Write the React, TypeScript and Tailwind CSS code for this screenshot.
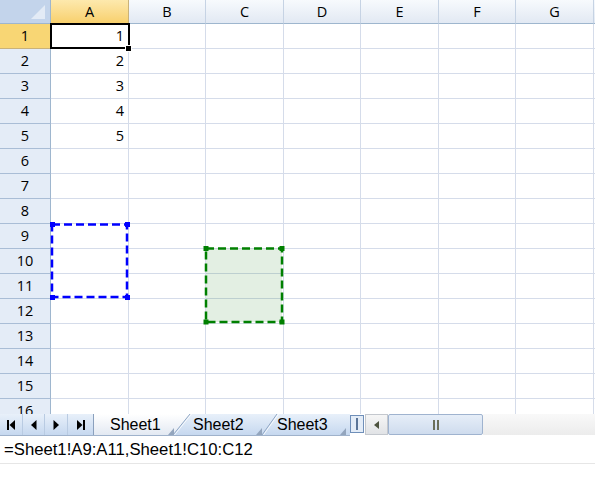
import React from 'react';

const COLS = ['A', 'B', 'C', 'D', 'E', 'F', 'G'];
const ROWS = Array.from({ length: 16 }, (_, i) => i + 1);

function Corner() {
  return (
    <div className="bg-[#c3d4eb] border-r border-b border-[#9eb6ce]">
      <svg width="50" height="23" className="block">
        <polygon points="45,5 45,19 31,19" fill="#e3ebf6" />
      </svg>
    </div>
  );
}

function NavGlyph({ kind }: { kind: 'first' | 'prev' | 'next' | 'last' }) {
  return (
    <svg width="10" height="10" viewBox="0 0 10 10" className="block">
      {kind === 'first' && (
        <>
          <rect x="1" y="0" width="2" height="10" fill="#000" />
          <polygon points="9,0 9,10 3.5,5" fill="#000" />
        </>
      )}
      {kind === 'prev' && <polygon points="7.5,0 7.5,10 2,5" fill="#000" />}
      {kind === 'next' && <polygon points="2.5,0 2.5,10 8,5" fill="#000" />}
      {kind === 'last' && (
        <>
          <polygon points="1,0 1,10 6.5,5" fill="#000" />
          <rect x="7" y="0" width="2" height="10" fill="#000" />
        </>
      )}
    </svg>
  );
}

export default function App() {
  return (
    <div className="w-[595px] h-[478px] bg-white overflow-hidden flex flex-col [font-family:'Open_Sans',sans-serif]">
      {/* Grid */}
      <div className="relative h-[414px] overflow-hidden shrink-0">
        <div className="grid grid-cols-[51px_78px_77px_78px_77px_78px_77px_78px_1fr] grid-rows-[24px_repeat(16,25px)] text-[14.5px] text-black">
          <Corner />
          {COLS.map((c, i) => (
            <div
              key={c}
              className={
                'flex items-center justify-center border-b border-r border-b-[#9eb6ce] ' +
                (i === 0
                  ? 'bg-gradient-to-b from-[#fde9ad] to-[#f8d06c] border-r-[#c9b27a]'
                  : 'bg-gradient-to-b from-[#f7fafd] to-[#e2e9f3] border-r-[#c6d3e4]')
              }
            >
              {c}
            </div>
          ))}
          <div className="bg-gradient-to-b from-[#f7fafd] to-[#e2e9f3] border-b border-[#9eb6ce]" />
          {ROWS.map((r) => (
            <React.Fragment key={r}>
              <div
                className={
                  'flex items-center justify-center border-r border-b border-r-[#9eb6ce] ' +
                  (r === 1 ? 'bg-[#f8d674] border-b-[#c9b27a]' : 'bg-[#e4ecf7] border-b-[#a9bdd6]')
                }
              >
                {r}
              </div>
              {COLS.map((c, i) => (
                <div
                  key={c}
                  className="flex items-center justify-end pr-[4px] border-r border-b border-[#d5dcea]"
                >
                  {i === 0 && r <= 5 ? r : ''}
                </div>
              ))}
              <div className="border-b border-[#d5dcea]" />
            </React.Fragment>
          ))}
        </div>

        {/* Overlays */}
        <div className="absolute left-[50px] top-[23px] w-[80px] h-[26px] border-2 border-black pointer-events-none" />
        <div className="absolute left-[125px] top-[45px] w-[7px] h-[7px] bg-black border border-white pointer-events-none" />

        <svg className="absolute left-0 top-0 pointer-events-none" width="595" height="414">
          <rect x="52" y="224.5" width="75" height="72.5" fill="none" stroke="#0000ff" strokeWidth="2.5" strokeDasharray="8 4" />
          <rect x="50" y="222" width="5" height="5" fill="#0000ff" />
          <rect x="125" y="222" width="5" height="5" fill="#0000ff" />
          <rect x="50" y="295" width="5" height="5" fill="#0000ff" />
          <rect x="125" y="295" width="5" height="5" fill="#0000ff" />

          <rect x="206" y="248.5" width="76" height="73.5" fill="rgba(0,110,0,0.11)" stroke="#008000" strokeWidth="2.5" strokeDasharray="8 4" />
          <rect x="203.5" y="246" width="5" height="5" fill="#008000" />
          <rect x="279.5" y="246" width="5" height="5" fill="#008000" />
          <rect x="203.5" y="319.5" width="5" height="5" fill="#008000" />
          <rect x="279.5" y="319.5" width="5" height="5" fill="#008000" />
        </svg>
      </div>

      {/* Tab strip + scrollbar */}
      <div className="flex h-[22px] shrink-0 [font-family:'Liberation_Sans',Arial,sans-serif] text-[16px] text-black">
        <div className="relative w-[350px] h-[22px] bg-gradient-to-b from-[#e8f0fa] to-[#c6d8ef] border-b border-[#9fb2cb]">
          <svg className="absolute left-0 top-0" width="350" height="21">
            <defs>
              <linearGradient id="act" x1="0" y1="0" x2="0" y2="1">
                <stop offset="0" stopColor="#ffffff" />
                <stop offset="1" stopColor="#e3e9f2" />
              </linearGradient>
            </defs>
            <polygon points="93,0 190,0 173,21 93,21" fill="url(#act)" />
            <line x1="93.5" y1="0" x2="93.5" y2="21" stroke="#8aa0bd" />
            <line x1="173" y1="21" x2="190" y2="0" stroke="#8fa6c4" />
            <line x1="174.5" y1="21" x2="191.5" y2="0" stroke="#ffffff" strokeOpacity="0.8" />
            <polygon points="168,21 174,14 174,21" fill="#93a5bd" />
            <line x1="262" y1="21" x2="277" y2="0" stroke="#8fa6c4" />
            <line x1="263.5" y1="21" x2="278.5" y2="0" stroke="#ffffff" strokeOpacity="0.8" />
            <polygon points="256,21 262,14 262,21" fill="#93a5bd" />
            <polygon points="340,21 346,14 346,21" fill="#93a5bd" />
          </svg>
          <div className="relative flex h-full items-stretch">
            <div className="flex w-[93px]">
              <div className="w-[23px] flex items-center justify-center border-r border-[#b9cbe2]"><NavGlyph kind="first" /></div>
              <div className="w-[22px] flex items-center justify-center border-r border-[#b9cbe2]"><NavGlyph kind="prev" /></div>
              <div className="w-[23px] flex items-center justify-center border-r border-[#b9cbe2]"><NavGlyph kind="next" /></div>
              <div className="w-[25px] flex items-center justify-center"><NavGlyph kind="last" /></div>
            </div>
            <div className="w-[100px] pl-[17px] flex items-center leading-none">Sheet1</div>
            <div className="w-[84px] flex items-center leading-none">Sheet2</div>
            <div className="flex items-center leading-none">Sheet3</div>
          </div>
        </div>
        <div className="w-[14px] h-[18px] mt-[1px] border border-[#6f8fb9] bg-[#e3ecf7] flex items-center justify-center">
          <div className="w-[2px] h-[12px] bg-[#5a7497]" />
        </div>
        <div className="w-[1px]" />
        <div className="flex-1 flex h-[21px]">
          <div className="w-[23px] border border-[#c4c8ce] bg-gradient-to-b from-[#f6f6f6] to-[#e1e3e6] flex items-center justify-center">
            <svg width="6" height="8" viewBox="0 0 6 8"><polygon points="5,0 5,8 0,4" fill="#4d533f" /></svg>
          </div>
          <div className="w-[95px] border border-[#9fb3cf] rounded-[2px] bg-gradient-to-b from-[#e6eef8] to-[#cfdcee] flex items-center justify-center gap-[2px]">
            <div className="w-[2px] h-[10px] bg-[#6b705a]" />
            <div className="w-[2px] h-[10px] bg-[#6b705a]" />
          </div>
          <div className="flex-1 bg-gradient-to-b from-[#f9f9f9] to-[#ececec]" />
        </div>
      </div>

      {/* Formula */}
      <div className="h-[28px] shrink-0 flex items-center pl-[4px] border-b border-[#e6e6e6] [font-family:'Liberation_Sans',Arial,sans-serif] text-[16.7px] text-black">
        =Sheet1!A9:A11,Sheet1!C10:C12
      </div>
    </div>
  );
}
